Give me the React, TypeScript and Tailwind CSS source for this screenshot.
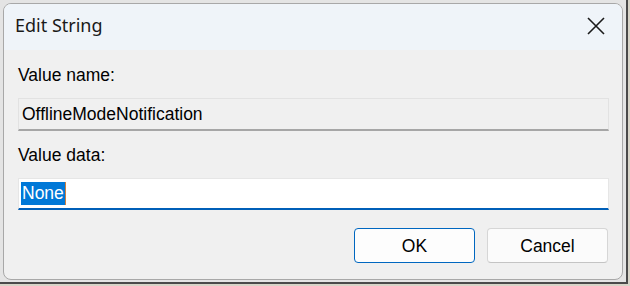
import React from "react";

const CloseIcon = () => (
  <svg width="18" height="18" viewBox="0 0 18 18" fill="none">
    <path d="M1 1L17 17M17 1L1 17" stroke="#1a1a1a" strokeWidth="1.6" />
  </svg>
);

const App: React.FC = () => {
  return (
    <div className="w-[630px] h-[286px] bg-[#d8d4c8] overflow-hidden">
      <div className="w-[628px] h-[284px] pl-[3px] pt-[3px] border-r-2 border-b-2 border-[#4a4a4a] bg-[#e4e4e4]">
        <div
          className="w-[620px] h-[277px] rounded-[8px] border border-[#a8a8a8] bg-[#f0f0f0] overflow-hidden flex flex-col"
          style={{ fontFamily: '"Liberation Sans", Arial, sans-serif' }}
        >
          {/* title bar */}
          <div className="h-[46px] shrink-0 bg-[#eff4f9] flex items-center justify-between pl-[11px] pr-[17px]">
            <span
              className="text-[18px] text-[#1a1a1a] pb-[3px]"
              style={{ fontFamily: '"Noto Sans", sans-serif' }}
            >
              Edit String
            </span>
            <span className="pb-[2px]">
              <CloseIcon />
            </span>
          </div>

          {/* body */}
          <div className="flex flex-col pl-[14px] pr-[13px] text-[17.5px] leading-[20px] text-black">
            <div className="mt-[15px]">Value name:</div>
            <div className="mt-[13px] h-[33px] flex items-center px-[3px] bg-[#f0f0f0] border border-[#e2e2e2] border-b-2 border-b-[#a6a6a6]">
              OfflineModeNotification
            </div>

            <div className="mt-[14px]">Value data:</div>
            <div className="mt-[13px] h-[32px] flex items-center px-[2px] bg-white border border-[#e6e6e6] border-b-2 border-b-[#005fb8]">
              <span className="bg-[#0078d7] text-white leading-[23px] px-[1px]">None</span>
              <span className="w-[1px] h-[23px] bg-[#d08040]" />
            </div>

            <div className="mt-[18px] flex justify-end gap-[12px] pr-[1px]">
              <button className="w-[121px] h-[35px] rounded-[4px] bg-[#fdfdfd] border border-[#0067c0] text-[17.5px] text-black">
                OK
              </button>
              <button className="w-[121px] h-[35px] rounded-[4px] bg-[#fbfbfb] border border-[#d6d6d6] border-b-[#c4c4c4] text-[17.5px] text-black">
                Cancel
              </button>
            </div>
          </div>
        </div>
      </div>
    </div>
  );
};

export default App;
